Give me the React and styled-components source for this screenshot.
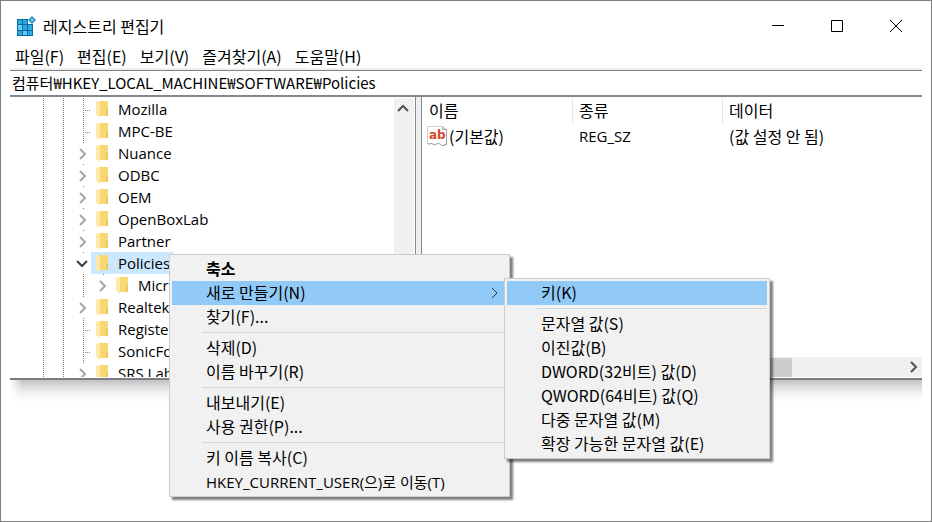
import styled, { createGlobalStyle } from "styled-components";

const GlobalStyle = createGlobalStyle`
    * {
        box-sizing: border-box;
    }

    body {
        margin: 0;
        background-color: #fff;
    }

    body, button, input, table {
        font-family: "Noto Sans CJK KR", sans-serif;
        font-size: 16px;
        color: #000;
    }

    button {
        padding: 0;
        border: none;
        background: none;
        text-align: left;
        white-space: nowrap;
    }

    ul {
        margin: 0;
        padding: 0;
        list-style: none;
    }

    svg {
        display: block;
        flex-shrink: 0;
    }
`;

const latinFont = `"Open Sans", "Noto Sans CJK KR", sans-serif`;

const Window = styled.div`
    position: relative;
    display: flex;
    flex-direction: column;
    height: 100vh;
    padding: 0 9px 119px;
    border: 1px solid #7f7f7f;
    overflow: hidden;
`;

const TitleBar = styled.header`
    display: flex;
    align-items: center;
    gap: 7px;
    height: 44px;
    padding: 6px 0 0 6px;

    h1 {
        flex: 1;
        margin: 0;
        font-size: 16px;
        font-weight: 400;
        line-height: 24px;
    }
`;

const WindowButton = styled.button`
    display: flex;
    align-items: center;
    justify-content: center;
    width: 52px;
    height: 38px;
`;

const MenuBar = styled.nav`
    display: flex;
    gap: 13px;
    height: 25px;
    padding-left: 5px;
    border-bottom: 2px solid #f0f0f0;

    button {
        line-height: 23px;
    }
`;

const Address = styled.input`
    width: 100%;
    height: 27px;
    padding: 0 2px 2px;
    font-size: 15px;
    border: solid #7f7f7f;
    border-width: 1px 0 2px;
    border-bottom-color: #828790;
    border-radius: 0;
    outline: none;
`;

const Panes = styled.main`
    display: flex;
    flex: 1;
    min-height: 0;
    padding: 1px 0;
    border-bottom: 2px solid #7a7d84;
`;

const PaneShadow = styled.div`
    height: 22px;
    background:
        linear-gradient(90deg, #fff, transparent 12px),
        linear-gradient(#c0c0c0, #dedede 30%, #f4f4f4 65%, #fff);
`;

const TreePane = styled.div`
    display: flex;
    width: 405px;
    overflow: hidden;
`;

const Tree = styled.ul`
    flex: 1;
    padding-left: 23px;
`;

const TreeRow = styled.li`
    display: flex;
    height: 22px;
`;

const dots = "#808080 0 1px, transparent 1px 2px";

const Guide = styled.span`
    width: 20px;
    background: repeating-linear-gradient(${dots}) 10px 0 / 1px 100% no-repeat;
`;

const Branch = styled.span`
    width: 18px;
    background:
        repeating-linear-gradient(${dots}) 10px 0 / 1px 100% no-repeat,
        repeating-linear-gradient(90deg, ${dots}) 10px 12px / 8px 1px no-repeat;
`;

const Expander = styled.button`
    display: flex;
    align-items: center;
    justify-content: center;
    width: 18px;
    padding-top: 2px;
    background: linear-gradient(#808080, #808080) 10px 0 / 1px 1px no-repeat;
`;

const TreeLabel = styled.button`
    display: flex;
    align-items: center;
    gap: 9px;
    padding: 0 4px 0 5px;
    font-family: ${latinFont};
    font-size: 15px;
    line-height: 22px;
    background-color: ${(props) => (props.$selected ? "#cce8ff" : "transparent")};
`;

const VerticalScroll = styled.div`
    display: flex;
    justify-content: center;
    width: 21px;
    padding: 5px 2px 0 0;
    border-right: 1px solid #fff;
    background-color: #f0f0f0;
`;

const Splitter = styled.div`
    width: 7px;
    margin: -1px 0;
    border: solid #828790;
    border-width: 0 1px;
    background-color: #f0f0f0;
`;

const ListPane = styled.section`
    display: flex;
    flex: 1;
    flex-direction: column;
    justify-content: space-between;
    min-width: 0;
`;

const ValueTable = styled.table`
    width: 100%;
    table-layout: fixed;
    border-collapse: separate;
    border-spacing: 0;
    line-height: 24px;

    th, td {
        padding: 0 0 2px 6px;
        font-weight: 400;
        text-align: left;
        white-space: nowrap;
    }

    th {
        border-right: 1px solid #e5e5e5;
    }

    th:first-child {
        padding-left: 7px;
    }

    th:last-child {
        border-right: none;
    }

    td:first-child {
        padding-left: 5px;
    }
`;

const ValueName = styled.div`
    display: flex;
    align-items: center;
    gap: 2px;
`;

const ValueType = styled.td`
    font-family: ${latinFont};
    font-size: 15px;
`;

const HorizontalScroll = styled.div`
    display: flex;
    align-items: center;
    justify-content: space-between;
    height: 20px;
    padding: 0 1px 0 20px;
    background-color: #f0f0f0;
`;

const Thumb = styled.div`
    width: 73%;
    height: 19px;
    background-color: #cdcdcd;
`;

const Menu = styled.ul`
    padding: 2px;
    border: 1px solid #ccc;
    background-color: #f1f1f1;
    box-shadow: 3px 3px 2px rgba(0, 0, 0, 0.5);
`;

const ContextMenu = styled(Menu)`
    position: absolute;
    top: 253px;
    left: 168px;
    width: 341px;
`;

const SubMenu = styled(Menu)`
    position: absolute;
    top: -3px;
    left: calc(100% - 3px);
    width: 266px;
`;

const MenuItem = styled.li`
    position: relative;
`;

const MenuButton = styled.button`
    display: flex;
    align-items: center;
    justify-content: space-between;
    width: 100%;
    height: 24px;
    padding: 0 6px 2px 34px;
    font-family: ${(props) => (props.$latin ? latinFont : "")};
    font-size: ${(props) => (props.$latin ? "15px" : "16px")};
    font-weight: ${(props) => (props.$bold ? 700 : 400)};
    background-color: ${(props) => (props.$active ? "#91c9f7" : "transparent")};
`;

const Separator = styled.li`
    height: 1px;
    margin: 3px 0 3px 30px;
    background-color: #d7d7d7;
`;

const keys = [
    { name: "Mozilla" },
    { name: "MPC-BE" },
    { name: "Nuance", state: "closed" },
    { name: "ODBC", state: "closed" },
    { name: "OEM", state: "closed" },
    { name: "OpenBoxLab", state: "closed" },
    { name: "Partner", state: "closed" },
    { name: "Policies", state: "open", selected: true },
    { name: "Microsoft", state: "closed", nested: true },
    { name: "Realtek", state: "closed" },
    { name: "Registered" },
    { name: "SonicFocus" },
    { name: "SRS Labs", state: "closed" },
];

const newItems = [
    { label: "키(K)", active: true },
    null,
    { label: "문자열 값(S)" },
    { label: "이진값(B)" },
    { label: "DWORD(32비트) 값(D)" },
    { label: "QWORD(64비트) 값(Q)" },
    { label: "다중 문자열 값(M)" },
    { label: "확장 가능한 문자열 값(E)" },
];

const contextItems = [
    { label: "축소", bold: true },
    { label: "새로 만들기(N)", active: true, items: newItems },
    { label: "찾기(F)..." },
    null,
    { label: "삭제(D)" },
    { label: "이름 바꾸기(R)" },
    null,
    { label: "내보내기(E)" },
    { label: "사용 권한(P)..." },
    null,
    { label: "키 이름 복사(C)" },
    { label: "HKEY_CURRENT_USER(으)로 이동(T)", latin: true },
];

function RegeditIcon() {
    return (
        <svg width="20" height="20" viewBox="0 0 20 20">
            <path d="M1 3h11v5h5v12H1z" fill="#0a6c9f" />
            <path
                d="M2 4h4v4H2zM7 4h4v4H7zM2 9h4v5H2zM7 9h4v5H7zM12 9h4v5h-4zM2 15h4v4H2zM7 15h4v4H7zM12 15h4v4h-4z"
                fill="#2ba9e0"
            />
            <path d="M2 9h4v5H2zM7 15h4v4H7z" fill="#5fcdf5" />
            <path d="M16 0l4 4-4 4-4-4z" fill="#2b8fbf" />
            <path d="M16 2l2 2-2 2-2-2z" fill="#6cc8ea" />
        </svg>
    );
}

function FolderIcon() {
    return (
        <svg width="13" height="18" viewBox="0 0 13 18">
            <path d="M3 1h9v15H3z" fill="#f8d775" />
            <path d="M10 9h2v7h-2z" fill="#efc55c" />
            <path d="M0 1l4 2v15l-4-3z" fill="#ffe9a6" />
        </svg>
    );
}

function StringIcon() {
    return (
        <svg width="20" height="20" viewBox="0 0 20 20">
            <path
                d="M.5.5h15l4 3v15l-4 1c-2 0-2-2-4-2s-2 1-4 1-2-1-3-1-2 1-4 0z"
                fill="#fff"
                stroke="#d0d0d0"
            />
            <path
                d="M19.5 3.5v15l-4 1c-2 0-2-2-4-2s-2 1-4 1-2-1-3-1-2 1-4 0"
                fill="none"
                stroke="#9a9a9a"
            />
            <path d="M15.5.5v3h4" fill="#ddd" stroke="#a5a5a5" />
            <text
                x="2"
                y="13"
                fill="#d9482b"
                fontFamily="DejaVu Sans"
                fontSize="12"
                fontWeight="700"
            >
                ab
            </text>
        </svg>
    );
}

function Chevron({ d, color = "#a6a6a6", width = 2 }) {
    return (
        <svg width="14" height="14" viewBox="0 0 14 14">
            <path d={d} fill="none" stroke={color} strokeWidth={width} />
        </svg>
    );
}

function MenuEntries({ items }) {
    return items.map((item, i) =>
        item === null ? (
            <Separator key={i} role="separator" />
        ) : (
            <MenuItem key={i}>
                <MenuButton
                    $bold={item.bold}
                    $active={item.active}
                    $latin={item.latin}
                >
                    {item.label}
                    {item.items && (
                        <Chevron d="M5 3l5 5-5 5" color="#333" width={1} />
                    )}
                </MenuButton>
                {item.items && (
                    <SubMenu>
                        <MenuEntries items={item.items} />
                    </SubMenu>
                )}
            </MenuItem>
        )
    );
}

function KeyRow({ item }) {
    return (
        <TreeRow>
            <Guide />
            <Guide />
            {item.nested && <Guide />}
            {item.state ? (
                <Expander aria-label={item.name}>
                    {item.state === "open" ? (
                        <Chevron d="M2 4l5 5 5-5" color="#404040" />
                    ) : (
                        <Chevron d="M5 2l5 5-5 5" />
                    )}
                </Expander>
            ) : (
                <Branch />
            )}
            <TreeLabel $selected={item.selected}>
                <FolderIcon />
                {item.name}
            </TreeLabel>
        </TreeRow>
    );
}

function App() {
    return (
        <>
            <GlobalStyle />
            <Window>
                <TitleBar>
                    <RegeditIcon />
                    <h1>레지스트리 편집기</h1>
                    <WindowButton aria-label="최소화">
                        <svg width="12" height="12" viewBox="0 0 12 12">
                            <path d="M0 5.5h12" stroke="#000" />
                        </svg>
                    </WindowButton>
                    <WindowButton aria-label="최대화">
                        <svg width="12" height="12" viewBox="0 0 12 12">
                            <path d="M.5.5h11v11H.5z" fill="none" stroke="#000" />
                        </svg>
                    </WindowButton>
                    <WindowButton aria-label="닫기">
                        <svg width="12" height="12" viewBox="0 0 12 12">
                            <path d="M0 0l12 12M12 0L0 12" stroke="#000" />
                        </svg>
                    </WindowButton>
                </TitleBar>
                <MenuBar>
                    <button>파일(F)</button>
                    <button>편집(E)</button>
                    <button>보기(V)</button>
                    <button>즐겨찾기(A)</button>
                    <button>도움말(H)</button>
                </MenuBar>
                <Address
                    type="text"
                    aria-label="주소"
                    defaultValue="컴퓨터₩HKEY_LOCAL_MACHINE₩SOFTWARE₩Policies"
                />
                <Panes>
                    <TreePane>
                        <Tree>
                            {keys.map((item) => (
                                <KeyRow key={item.name} item={item} />
                            ))}
                        </Tree>
                        <VerticalScroll>
                            <Chevron d="M2 8l5-5 5 5" color="#505050" />
                        </VerticalScroll>
                    </TreePane>
                    <Splitter />
                    <ListPane>
                        <ValueTable>
                            <colgroup>
                                <col width="151" />
                                <col width="150" />
                                <col />
                            </colgroup>
                            <thead>
                                <tr>
                                    <th>이름</th>
                                    <th>종류</th>
                                    <th>데이터</th>
                                </tr>
                            </thead>
                            <tbody>
                                <tr>
                                    <td>
                                        <ValueName>
                                            <StringIcon />
                                            (기본값)
                                        </ValueName>
                                    </td>
                                    <ValueType>REG_SZ</ValueType>
                                    <td>(값 설정 안 됨)</td>
                                </tr>
                            </tbody>
                        </ValueTable>
                        <HorizontalScroll>
                            <Thumb />
                            <Chevron d="M4 2l5 5-5 5" color="#505050" />
                        </HorizontalScroll>
                    </ListPane>
                </Panes>
                <PaneShadow />
                <ContextMenu>
                    <MenuEntries items={contextItems} />
                </ContextMenu>
            </Window>
        </>
    );
}

export default App;
